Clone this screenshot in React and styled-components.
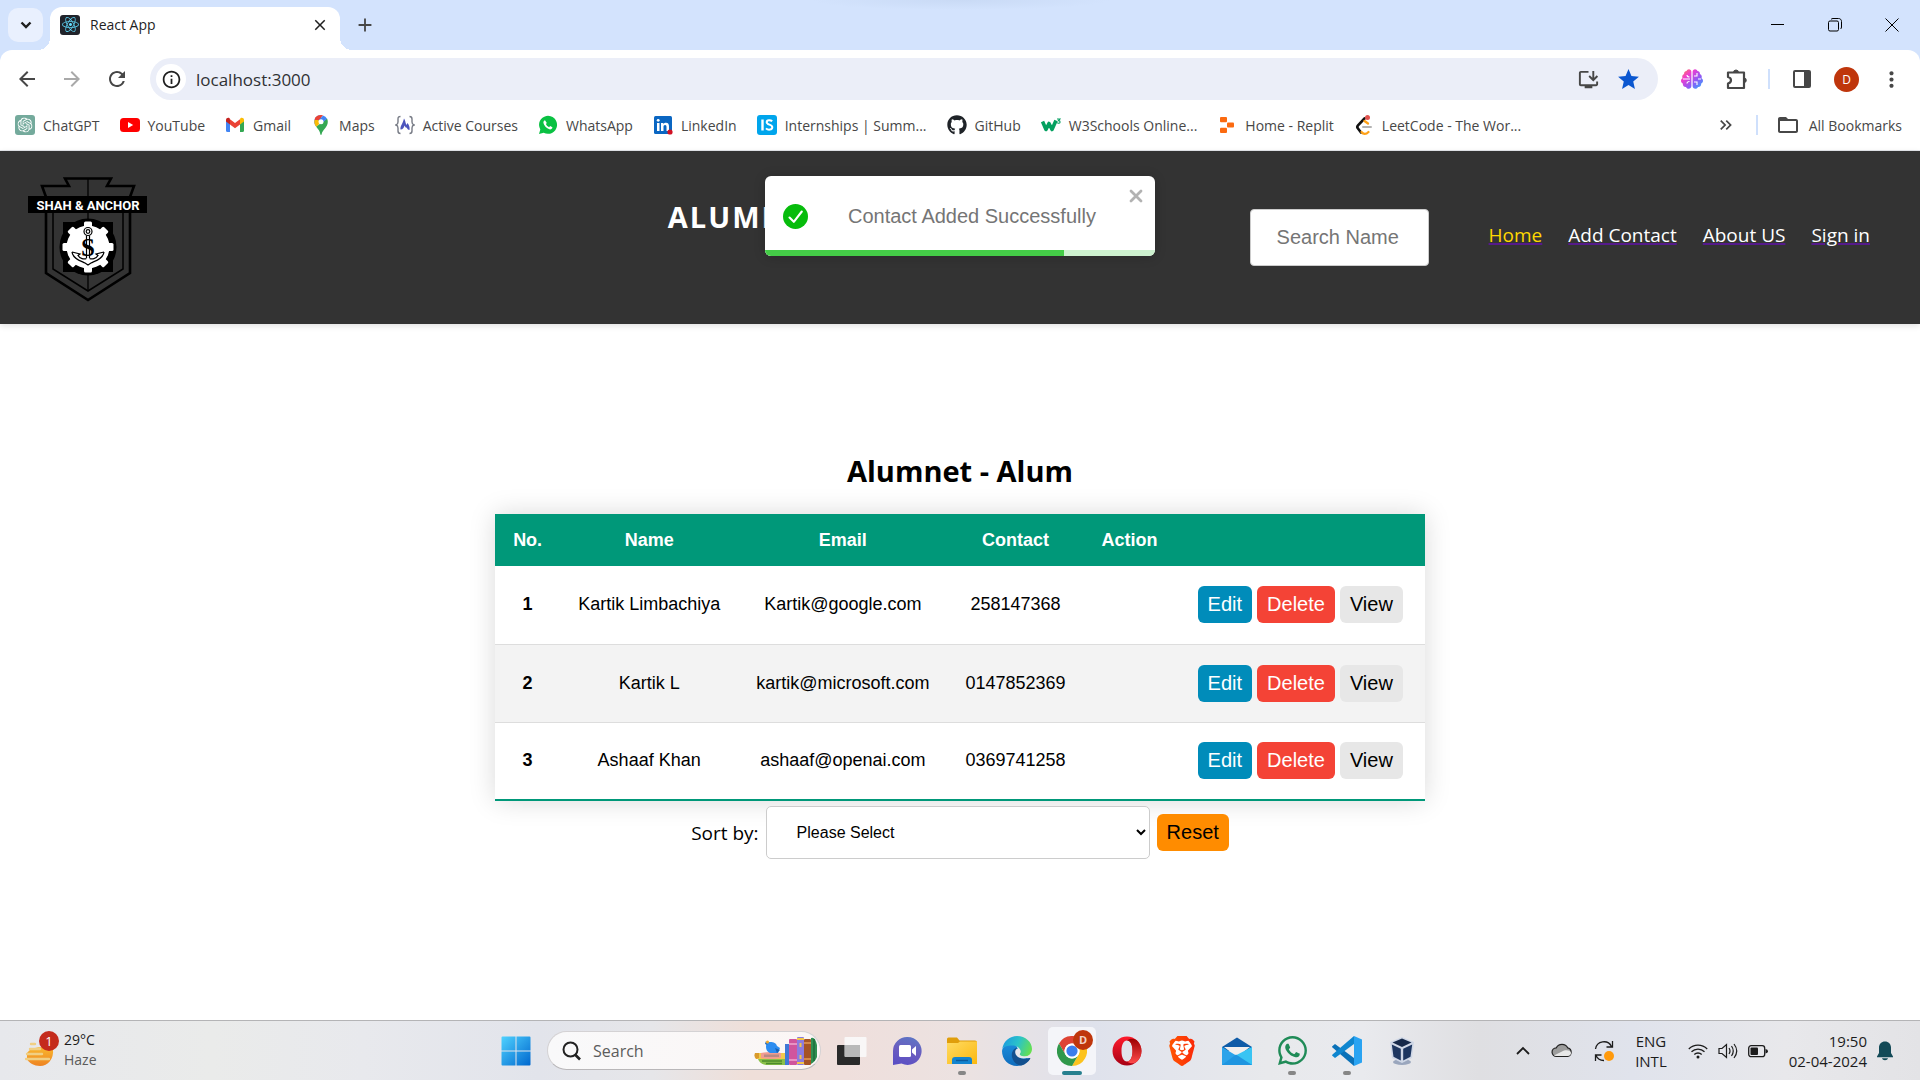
import React from "react";
import styled, { createGlobalStyle } from "styled-components";
import {
  MdAdd,
  MdArrowBack,
  MdArrowForward,
  MdClose,
  MdFolderOpen,
  MdInfoOutline,
  MdInstallDesktop,
  MdKeyboardDoubleArrowRight,
  MdMoreVert,
  MdRefresh,
  MdStar,
} from "react-icons/md";
import { FaBrain, FaGithub, FaReact, FaWhatsapp } from "react-icons/fa";
import { SiBrave, SiOpenai } from "react-icons/si";

const ui = `"Open Sans", "Noto Sans", sans-serif`;
const arial = `"Liberation Sans", Arial, sans-serif`;

const GlobalStyle = createGlobalStyle`
  *, *::before, *::after { box-sizing: border-box; }
  body { margin: 0; background: #fff; font-family: ${ui}; color: #000; }
  button, input, select { font: inherit; color: inherit; margin: 0; }
  button { border: 0; padding: 0; background: none; cursor: pointer; }
  svg { display: block; flex: none; }
`;

/* ---------- browser window ---------- */

const Screen = styled.div`
  display: flex;
  flex-direction: column;
  min-height: 100vh;
`;

const TabStrip = styled.header`
  display: flex;
  align-items: flex-end;
  height: 50px;
  padding-left: 8px;
  background: radial-gradient(ellipse 150px 10px at 50% 0, #c9daf5, transparent) #d3e3fd;
`;

const TabSearch = styled.button`
  display: grid;
  place-items: center;
  width: 35px;
  height: 34px;
  margin: 0 7px 8px 0;
  border-radius: 10px;
  background: #e9f0fe;
  color: #1f1f1f;
`;

const Tab = styled.div`
  position: relative;
  display: flex;
  align-items: center;
  gap: 10px;
  width: 290px;
  height: 43px;
  padding: 0 11px 8px 10px;
  border-radius: 12px 12px 0 0;
  background: #fff;
  font-size: 14px;
  color: #1f1f1f;

  &::before,
  &::after {
    content: "";
    position: absolute;
    bottom: 0;
    width: 12px;
    height: 12px;
  }
  &::before {
    right: 100%;
    background: radial-gradient(circle at 0 0, transparent 12px, #fff 12px);
  }
  &::after {
    left: 100%;
    background: radial-gradient(circle at 100% 0, transparent 12px, #fff 12px);
  }
`;

const TabTitle = styled.span`
  flex: 1;
`;

const Favicon = styled.span`
  display: grid;
  place-items: center;
  width: 20px;
  height: 20px;
  border-radius: 3px;
  background: #20232a;
  color: #61dafb;
`;

const IconButton = styled.button`
  display: grid;
  place-items: center;
  width: ${(p) => p.$w || 24}px;
  height: ${(p) => p.$h || 24}px;
  color: ${(p) => p.$color || "#474747"};
`;

const NewTab = styled(IconButton)`
  margin: 0 0 9px 9px;
`;

const WindowControls = styled.div`
  display: flex;
  margin-left: auto;
  align-self: stretch;
`;

const Toolbar = styled.div`
  background: #d3e3fd;
`;

const ToolbarPanel = styled.div`
  border-radius: 12px 12px 0 0;
  background: #fff;
  border-bottom: 1px solid #e4e6ea;
`;

const AddressRow = styled.div`
  display: flex;
  align-items: center;
  padding: 8px 17px 0 15px;
`;

const NavButtons = styled.div`
  display: flex;
  gap: 21px;
  margin-right: 21px;
`;

const Omnibox = styled.label`
  display: flex;
  flex: 1;
  align-items: center;
  height: 42px;
  padding: 0 18px 0 6px;
  border-radius: 21px;
  background: #ebeef8;
`;

const SiteInfo = styled(IconButton)`
  border-radius: 50%;
  background: #fff;
`;

const UrlInput = styled.input`
  flex: 1;
  border: 0;
  outline: 0;
  padding: 0 0 0 10px;
  background: none;
  font-size: 17px;
  color: #303134;
`;

const OmniActions = styled.div`
  display: flex;
  gap: 16px;
`;

const Extensions = styled.div`
  display: flex;
  align-items: center;
  gap: 20px;
  margin-left: 22px;
`;

const Divider = styled.span`
  width: 2px;
  height: 20px;
  background: #cfe0fc;
`;

const Avatar = styled.button`
  width: 25px;
  height: 25px;
  border-radius: 50%;
  background: #bf360c;
  color: #fff;
  font-size: 12px;
`;

const Bookmarks = styled.nav`
  display: flex;
  align-items: center;
  gap: 20px;
  height: 50px;
  padding: 0 18px 0 15px;
  font-size: 14px;
  color: #474747;
`;

const Bookmark = styled.a`
  display: flex;
  align-items: center;
  gap: 8px;
  color: inherit;
  text-decoration: none;
  white-space: nowrap;
`;

const BookmarkEnd = styled.div`
  display: flex;
  align-items: center;
  gap: 18px;
  margin-left: auto;
`;

const AllBookmarks = styled.button`
  display: flex;
  align-items: center;
  gap: 9px;
`;

/* ---------- page ---------- */

const Page = styled.div`
  position: relative;
  flex: 1;
  background: #fff;
`;

const SiteHeader = styled.header`
  display: grid;
  grid-template-columns: 11fr 10fr auto;
  align-items: center;
  padding: 22px 50px 22px 28px;
  background: #333;
  box-shadow: 0 2px 6px rgba(0, 0, 0, 0.12);
`;

const SiteTitle = styled.h1`
  margin: 0;
  padding-bottom: 42px;
  font-size: 29px;
  line-height: 40px;
  font-weight: 700;
  letter-spacing: 2px;
  color: #fff;
`;

const HeaderTools = styled.div`
  display: flex;
  align-items: center;
  gap: 60px;
`;

const SearchInput = styled.input`
  width: 179px;
  height: 57px;
  padding: 0 26px;
  border: 1px solid #ccc;
  border-radius: 4px;
  background: #fff;
  font-family: ${arial};
  font-size: 20px;

  &::placeholder {
    color: #757575;
    opacity: 1;
  }
`;

const SiteNav = styled.nav`
  display: flex;
  gap: 26px;
  padding-bottom: 5px;
  font-size: 19px;
`;

const SiteLink = styled.a`
  color: ${(p) => (p.$active ? "#ffd700" : "#fff")};
  text-decoration: underline 2px #551a8b;
`;

const Toast = styled.div`
  position: absolute;
  top: 25px;
  left: 50%;
  width: 390px;
  margin-left: -195px;
  border-radius: 6px;
  overflow: hidden;
  background: #fff;
  box-shadow: 0 1px 12px rgba(0, 0, 0, 0.2);
  font-family: ${arial};
  font-size: 20px;
  color: #757575;
`;

const ToastBody = styled.div`
  display: flex;
  align-items: center;
  gap: 40px;
  height: 74px;
  padding: 7px 18px 0;
`;

const ToastClose = styled.button`
  position: absolute;
  top: 12px;
  right: 11px;
  color: #b2b2b2;
`;

const ToastTrack = styled.div`
  height: 6px;
  background: #cdf1cf;
`;

const ToastFill = styled.div`
  height: 6px;
  background: #44cc47;
`;

const Main = styled.main`
  display: flex;
  flex-direction: column;
  align-items: center;
  padding: 127px 20px 40px;
`;

const Heading = styled.h2`
  margin: 0 0 23px;
  font-size: 29px;
  line-height: 40px;
  font-weight: 700;
`;

const Table = styled.table`
  border-collapse: collapse;
  background: #fff;
  box-shadow: 0 0 25px rgba(0, 0, 0, 0.15);
  font-family: ${arial};
  font-size: 18px;
  text-align: center;

  th,
  td {
    padding: 0 18px;
  }
  thead tr {
    height: 52px;
    background: #009879;
    color: #fff;
  }
  tbody tr {
    height: 78px;
    border-bottom: 1px solid #ddd;
  }
  tbody tr:nth-of-type(even) {
    background: #f3f3f3;
  }
  tbody tr:last-of-type {
    border-bottom: 2px solid #009879;
  }
`;

const Actions = styled.div`
  display: flex;
  gap: 5px;
  padding: 0 4px;
`;

const tones = {
  edit: ["#008cba", "#fff"],
  danger: ["#f44336", "#fff"],
  view: ["#e7e7e7", "#000"],
  reset: ["#ff8c00", "#000"],
};

const ActionButton = styled.button`
  height: 37px;
  padding: 0 10px;
  border-radius: 6px;
  background: ${(p) => tones[p.$tone][0]};
  color: ${(p) => tones[p.$tone][1]};
  font-family: ${arial};
  font-size: 20px;
`;

const SortRow = styled.div`
  display: flex;
  align-items: center;
  gap: 7px;
  margin-top: 5px;
  font-size: 19px;
`;

const SortSelect = styled.select`
  width: 384px;
  height: 53px;
  padding: 0 26px;
  border: 1px solid #ccc;
  border-radius: 5px;
  background: #fff;
  font-family: ${arial};
  font-size: 16px;
`;

/* ---------- taskbar ---------- */

const Taskbar = styled.footer`
  display: grid;
  grid-template-columns: 1fr auto 1fr;
  align-items: center;
  height: 60px;
  padding: 0 27px 0 25px;
  border-top: 1px solid #b4b4b6;
  background: linear-gradient(
    90deg,
    #e7e8ec 0%,
    #eaebea 11%,
    #e8e9ed 19%,
    #e2e4eb 28%,
    #e6e6e9 34%,
    #efdfd9 39%,
    #efdfdc 44%,
    #ece2e1 50%,
    #dfe2ec 57%,
    #e8e9ec 66%,
    #e9eaee 71%,
    #dfdfe2 77%,
    #e0e3ec 85%,
    #e8e8eb 93%,
    #e3e3e6 100%
  );
  font-size: 14px;
  color: #1c1c1c;
`;

const Weather = styled.button`
  display: flex;
  align-items: center;
  gap: 5px;
  justify-self: start;
  padding-bottom: 2px;
  line-height: 20px;
  text-align: left;
`;

const Muted = styled.span`
  display: block;
  color: #5b5b5b;
`;

const Apps = styled.div`
  display: flex;
  align-items: center;
  gap: 7px;
`;

const AppButton = styled.button`
  position: relative;
  display: grid;
  place-items: center;
  width: 48px;
  height: 48px;
  border-radius: 5px;
  background: ${(p) => (p.$active ? "#f4f5f9" : "none")};

  &::after {
    content: "";
    position: absolute;
    bottom: 0;
    width: ${(p) => (p.$active ? 20 : 8)}px;
    height: 4px;
    border-radius: 2px;
    background: ${(p) => (p.$active ? "#26808f" : p.$running ? "#868686" : "transparent")};
  }
`;

const AppBadge = styled.span`
  position: absolute;
  top: 3px;
  right: 3px;
  width: 20px;
  height: 20px;
  border-radius: 50%;
  background: #bf360c;
  color: #f3d3c8;
  font-size: 11px;
  font-weight: 700;
  line-height: 20px;
`;

const TaskSearch = styled.label`
  display: flex;
  align-items: center;
  gap: 12px;
  width: 274px;
  height: 39px;
  padding: 0 2px 0 14px;
  border: 1px solid #d4d2d4;
  border-bottom-color: #b9b7b9;
  border-radius: 20px;
  background: linear-gradient(90deg, #f9f9fa, #fbf6f5);
`;

const TaskSearchInput = styled.input`
  flex: 1;
  min-width: 0;
  padding: 0;
  border: 0;
  outline: 0;
  background: none;
  font-size: 16px;

  &::placeholder {
    color: #5c5c5c;
    opacity: 1;
  }
`;

const Tray = styled.div`
  display: flex;
  align-items: center;
  justify-self: end;
  gap: 21px;
  font-size: 15px;
`;

const TrayText = styled.button`
  line-height: 20px;
  text-align: ${(p) => p.$align || "center"};
`;

const TrayGroup = styled.div`
  display: flex;
  align-items: center;
  gap: 10px;
`;

/* ---------- drawings ---------- */

const ChevronDownIcon = () => (
  <svg width="14" height="14" viewBox="0 0 14 14" fill="none" stroke="currentColor" strokeWidth="2.400">
    <path d="M2.500 4.500L7 9l4.500-4.500" />
  </svg>
);

const PuzzleIcon = () => (
  <svg width="25" height="25" viewBox="0 0 25 25" fill="none" stroke="currentColor" strokeWidth="2.200" strokeLinejoin="round">
    <path d="M4 5.500H20V21H4V16.500C8 15.500 8 11 4 10z" />
    <path d="M9.500 5.500a2.500 2.500 0 0 1 5 0zM20 11a2.300 2.300 0 0 1 0 4.600z" fill="currentColor" strokeWidth="1" />
  </svg>
);

const ChatGptIcon = () => (
  <svg width="20" height="20" viewBox="0 0 20 20">
    <rect width="20" height="20" rx="3" fill="#74aa9c" />
    <g transform="translate(2.5 2.5)">
      <SiOpenai size={15} color="#fff" />
    </g>
  </svg>
);

const YouTubeIcon = () => (
  <svg width="20" height="20" viewBox="0 0 20 20">
    <rect y="3" width="20" height="14" rx="3.500" fill="#f00" />
    <path d="M8 7l5.200 3L8 13z" fill="#fff" />
  </svg>
);

const GmailIcon = () => (
  <svg width="20" height="20" viewBox="0 0 20 20">
    <path d="M1 5v10.500a1.500 1.500 0 0 0 1.500 1.500H5V8.500z" fill="#4285f4" />
    <path d="M15 8.500V17h2.500a1.500 1.500 0 0 0 1.500-1.500V5z" fill="#34a853" />
    <path d="M15 4.500V9.500L19 6.500V5c0-2-2.200-2.900-3.600-1.800z" fill="#fbbc04" />
    <path d="M5 9.500V4.300l5 3.800 5-3.800v5.200l-5 3.800z" fill="#ea4335" />
    <path d="M1 5v1.500l4 3V4.300L4.600 3.200C3.200 2.100 1 3 1 5z" fill="#c5221f" />
  </svg>
);

const MapsIcon = () => (
  <svg width="20" height="20" viewBox="0 0 20 20">
    <path d="M10 0C6 0 3.200 3.100 3.200 6.800c0 1.700.6 3 1.500 4.200L10 5z" fill="#4285f4" />
    <path d="M4.700 1.900A6.700 6.700 0 0 0 3.600 4.600L7 7.500 10.500 3z" fill="#ea4335" />
    <path d="M3.500 5C2.800 8 3.900 10 5.300 11.900L12 5z" fill="#fbbc04" />
    <path d="M16 3.600l-10.800 8.200C7.500 14.700 8.800 16 9.300 19c.2 1.200 1.200 1.200 1.400 0 .6-4 6.100-6.500 6.100-12.200 0-1.200-.3-2.300-.8-3.200z" fill="#34a853" />
    <path d="M10 0c-2.200 0-4 .8-5.300 2.200L8 5l4-4.700A6 6 0 0 0 10 0z" fill="#ea4335" />
    <path d="M12 .4L7.500 5.500 10 9l6-5.300A6.600 6.600 0 0 0 12 .4z" fill="#4285f4" />
    <circle cx="10" cy="6.800" r="2.500" fill="#fff" />
  </svg>
);

const CoursesIcon = () => (
  <svg width="20" height="20" viewBox="0 0 20 20" fill="none">
    <path d="M5.500 1.500c-2 0-2.500.8-2.500 2.500v3c0 1.800-.7 2.600-2 3 1.300.4 2 1.200 2 3v3c0 1.700.5 2.500 2.500 2.500M14.500 1.500c2 0 2.500.8 2.500 2.500v3c0 1.800.7 2.600 2 3-1.300.4-2 1.200-2 3v3c0 1.700-.5 2.500-2.500 2.500" stroke="#777b85" strokeWidth="1.400" />
    <path d="M5.500 14.500C5 11 7.500 9.500 9 3.500c1.500 2 1.200 4 2.500 6.500l1-2c1.500 2 2.500 4 2 7-1.500 0-2.300-1.200-2.700-2.500-1 .8-1.500-.5-2.300-2C9 12.500 8 14.500 5.500 14.500z" fill="#4b53bc" />
  </svg>
);

const WhatsAppBookmarkIcon = () => (
  <svg width="20" height="20" viewBox="0 0 20 20">
    <path d="M1 19l1.300-4.600A9 9 0 1 1 5.700 17.700z" fill="#0ac143" />
    <path d="M7 5.200c-.7.100-1.700 1-1.600 2.400.2 2.900 3.700 6.600 6.700 6.800 1.300 0 2.300-.9 2.300-2.200l-2.300-1.200-1 1.200c-1.500-.6-2.500-1.600-3.200-3.100l.9-1.100z" fill="#fff" />
  </svg>
);

const LinkedInIcon = () => (
  <svg width="20" height="20" viewBox="0 0 20 20">
    <rect x="1" y="1" width="18" height="18" rx="1.500" fill="#0a66c2" />
    <path d="M4 8h2.500v8H4zM8 8h2.400v1.200C11 8.200 12 7.800 13 7.800c2.300 0 3 1.400 3 3.700V16h-2.500v-4c0-1.200-.3-2-1.400-2-1.200 0-1.600.8-1.600 2v4H8z" fill="#fff" />
    <circle cx="5.200" cy="5.300" r="1.400" fill="#fff" />
    <circle cx="17" cy="17" r="2.600" fill="#d11124" />
  </svg>
);

const InternshipsIcon = () => (
  <svg width="20" height="20" viewBox="0 0 20 20">
    <rect width="20" height="20" rx="3" fill="#00a5ec" />
    <path d="M5.500 4.500v11" stroke="#fff" strokeWidth="2.400" />
    <path d="M15.200 6.300c-1.500-1.400-5.500-1.700-5.500.9 0 2.800 5.600 2 5.600 5 0 3-4.500 3-6.300 1.200" fill="none" stroke="#fff" strokeWidth="2" />
  </svg>
);

const W3Icon = () => (
  <svg width="20" height="20" viewBox="0 0 20 20" fill="none">
    <path d="M1.500 6.500l3.500 8 3-6 3 6 4-9" stroke="#04a060" strokeWidth="3.600" strokeLinejoin="round" />
    <path d="M16 4h3l-1.500 1.600c1.300 0 1.600.7 1.600 1.400 0 1.400-2.100 1.600-3 .7" stroke="#04a060" strokeWidth="1.100" />
  </svg>
);

const ReplitIcon = () => (
  <svg width="20" height="20" viewBox="0 0 20 20" fill="#fb6a10">
    <rect x="3" y="2" width="7" height="5.200" rx="1" />
    <rect x="10" y="7.400" width="7" height="5.200" rx="1" />
    <rect x="3" y="12.800" width="7" height="5.200" rx="1" />
  </svg>
);

const LeetCodeIcon = () => (
  <svg width="20" height="20" viewBox="0 0 20 20" fill="none" strokeLinecap="round">
    <path d="M10.500 3.500L4 10.300c-.9 1-.9 2.200 0 3.200l3 4" stroke="#111" strokeWidth="2.600" />
    <path d="M10.500 6l3.500 2.500M7.500 17c1.800 2.400 4.500 2.600 7 0" stroke="#ffa116" strokeWidth="2.200" />
    <path d="M9 12h8" stroke="#b3b3b3" strokeWidth="2" />
    <circle cx="13.500" cy="2.500" r="2.500" fill="#e0524d" />
  </svg>
);

const SidePanelIcon = () => (
  <svg width="20" height="20" viewBox="0 0 20 20">
    <rect x="2" y="2" width="16" height="16" rx="1" fill="none" stroke="#474747" strokeWidth="2" />
    <path d="M12 2h6v16h-6z" fill="#474747" />
  </svg>
);

const MinimizeIcon = () => (
  <svg width="14" height="14" viewBox="0 0 14 14" stroke="#000">
    <path d="M0 6.500h13" />
  </svg>
);

const RestoreIcon = () => (
  <svg width="14" height="14" viewBox="0 0 14 14" fill="none" stroke="#000">
    <rect x=".5" y="3" width="10" height="10" rx="1.500" />
    <path d="M3 1.500C3.500.8 4 .5 5 .5h5.500c1.800 0 3 1.200 3 3V9c0 1-.3 1.500-1 2" />
  </svg>
);

const CloseIcon = () => (
  <svg width="14" height="14" viewBox="0 0 14 14" stroke="#000">
    <path d="M.5.5l13 13M13.500.5l-13 13" />
  </svg>
);

const gearTeeth = [0, 45, 90, 135, 180, 225, 270, 315];

const CollegeLogo = () => (
  <svg width="120" height="129" viewBox="0 -4 120 129" role="img" aria-label="Shah & Anchor logo">
    <g fill="none" stroke="#000" strokeWidth="2.600">
      <path d="M18 20L14 9H41L37 1.500H83L79 9H106L102 20" />
      <path d="M18 36V96L60 123L102 96V36" />
      <path d="M25 36V92L60 114L95 92V36" strokeWidth="1.500" />
      <path d="M60 2V113" strokeWidth="1.300" />
    </g>
    <rect x="0" y="19" width="119" height="17" fill="#000" />
    <text x="60" y="32.500" textAnchor="middle" fill="#fff" fontFamily="Roboto, sans-serif" fontSize="13" fontWeight="700">
      SHAH &amp; ANCHOR
    </text>
    <rect x="35" y="45" width="50" height="50" fill="#000" />
    <circle cx="60" cy="70" r="28.500" fill="#000" />
    <circle cx="60" cy="70" r="21.500" fill="#fff" />
    {gearTeeth.map((angle) => (
      <rect key={angle} x="56" y="44.500" width="8" height="9" rx="1.500" fill="#fff" transform={`rotate(${angle} 60 70)`} />
    ))}
    <g fill="none" stroke="#000" strokeWidth="1.200">
      <circle cx="60" cy="54.500" r="4" />
      <circle cx="60" cy="54.500" r="1.800" />
      <path d="M58.500 58.500V81M61.500 58.500V81M44 75l8 2-2 1.500c2 3.500 6 4 8.500 3M76 75l-8 2 2 1.500c-2 3.500-6 4-8.500 3M44 75c1 7 9 9 13 11l3 2 3-2c4-2 12-4 13-11" />
    </g>
    <text x="60" y="78.500" textAnchor="middle" fontFamily="Liberation Serif, serif" fontSize="25" fontWeight="700">
      S
    </text>
  </svg>
);

const SuccessIcon = () => (
  <svg width="25" height="25" viewBox="0 0 25 25">
    <circle cx="12.500" cy="12.500" r="12.500" fill="#07bc0c" />
    <path d="M6.500 13.500l4.300 4.300 8-10.300" fill="none" stroke="#fff" strokeWidth="2.100" strokeLinecap="round" strokeLinejoin="round" />
  </svg>
);

const ToastCross = () => (
  <svg width="16" height="16" viewBox="0 0 16 16">
    <path d="M3 3l10 10M13 3L3 13" stroke="currentColor" strokeWidth="2.800" strokeLinecap="round" />
  </svg>
);

const WeatherIcon = () => (
  <svg width="34" height="38" viewBox="0 0 34 38">
    <defs>
      <linearGradient id="sun" x1="0" y1="0" x2="0" y2="1">
        <stop offset="0" stopColor="#f9b82e" />
        <stop offset="1" stopColor="#ee8322" />
      </linearGradient>
    </defs>
    <path d="M2 22C5 17 14 14 28 18c1 10-5 17-13 17C9 35 4 32 2 28z" fill="url(#sun)" />
    <g stroke="#f0cf83" strokeWidth="2.400" strokeLinecap="round">
      <path d="M6 13h4M5 18h10M2 23h11M1 28h23M14 23h3" />
    </g>
    <circle cx="24" cy="10" r="10" fill="#c42b1c" />
    <text x="24" y="15" textAnchor="middle" fontFamily="Open Sans, sans-serif" fontSize="13" fill="#fff">
      1
    </text>
  </svg>
);

const WindowsIcon = () => (
  <svg width="30" height="30" viewBox="0 0 30 30">
    <defs>
      <linearGradient id="win" x1="0" y1="0" x2="1" y2="1">
        <stop offset="0" stopColor="#4fd2ff" />
        <stop offset="1" stopColor="#0067ce" />
      </linearGradient>
    </defs>
    <path fill="url(#win)" d="M1.500.5H14.500V14.500H.5V1.500a1 1 0 0 1 1-1zM15.500.5H28.500a1 1 0 0 1 1 1V14.500H15.500zM.5 15.500H14.500V29.500H1.500a1 1 0 0 1-1-1zM15.500 15.500H29.500V28.500a1 1 0 0 1-1 1H15.500z" />
  </svg>
);

const MagnifierIcon = () => (
  <svg width="19" height="20" viewBox="0 0 19 20" fill="none" stroke="#222" strokeWidth="2">
    <circle cx="8.500" cy="8.500" r="7" />
    <path d="M13 13.500l5 5" strokeWidth="2.600" />
  </svg>
);

const BooksIcon = () => (
  <svg width="64" height="30" viewBox="0 0 64 30">
    <path d="M2 17h29v6H2z" fill="#f2c94c" />
    <path d="M1 17q-1.500 3 1 6l3-1v-5z" fill="#d99a2b" />
    <path d="M7 17q10-2 20 0v5q-10 2-20 0z" fill="#f29c91" />
    <path d="M10 18.500h15v2.500H10z" fill="#b98a83" />
    <path d="M4 23h27v6H12q-6-1-8-6z" fill="#8bc04a" />
    <path d="M8 25h20M12 27.500h16" stroke="#4d8a2c" strokeWidth="1.400" />
    <path d="M12 11c0-3 1-5 4-5 4 0 6 1 7 4l3 2-2 5H16c-2.500-1-4-3-4-6z" fill="#2d8df0" />
    <path d="M12 5l1.500 4L11 8zM21 12l5 2-3 3z" fill="#1762b8" />
    <circle cx="13.500" cy="6" r="1.500" fill="#f5a623" />
    <rect x="31" y="8" width="4" height="21" fill="#3f78d6" />
    <rect x="35" y="3" width="8" height="26" rx="1" fill="#d0559d" />
    <path d="M35 8h8M35 24h8" stroke="#f0a8cf" strokeWidth="1.500" />
    <rect x="43" y="1" width="7" height="28" rx="1" fill="#8b7be0" />
    <path d="M43 3h7M43 27h7M46.500 7v4M46.500 19v4" stroke="#f3c64b" strokeWidth="2" />
    <rect x="50" y="3" width="7" height="26" rx="1" fill="#a55326" />
    <path d="M50 7h7M50 23h7" stroke="#e49a55" strokeWidth="1.500" />
    <path d="M57 2q4-2 6 7v12q-2 5-6 7z" fill="#2f8f52" />
    <path d="M60 3v22" stroke="#1f6d3c" strokeWidth="1.500" />
  </svg>
);

const TaskViewIcon = () => (
  <svg width="30" height="30" viewBox="0 0 30 30">
    <rect x="0" y="9" width="23" height="20" rx="1" fill="#2a2a2a" />
    <rect x="7.500" y="1" width="22" height="20" rx="1" fill="#fafafa" fillOpacity=".9" />
    <path d="M8 9h15v12H8z" fill="#b9b9b9" />
  </svg>
);

const ChatIcon = () => (
  <svg width="30" height="30" viewBox="0 0 30 30">
    <defs>
      <linearGradient id="chat" x1=".6" y1="0" x2=".3" y2="1">
        <stop offset="0" stopColor="#5e74c4" />
        <stop offset=".5" stopColor="#6a5cc0" />
        <stop offset="1" stopColor="#5a4fc4" />
      </linearGradient>
    </defs>
    <path d="M15.500 1a14 14 0 1 1-6 26.600L1 29V15A14 14 0 0 1 15.500 1z" fill="url(#chat)" />
    <rect x="7" y="9" width="12" height="12" rx="1.500" fill="#fff" />
    <path d="M20 13.500l4-3.500v10l-4-3.500z" fill="#fff" />
  </svg>
);

const FolderIcon = () => (
  <svg width="30" height="30" viewBox="0 0 30 30">
    <defs>
      <linearGradient id="folder" x1="0" y1="0" x2="1" y2="1">
        <stop offset="0" stopColor="#ffdb63" />
        <stop offset="1" stopColor="#fbb80f" />
      </linearGradient>
    </defs>
    <path d="M0 3q0-1.500 1.500-1.500H10l2.500 3H28q2 0 2 2V10H0z" fill="#e09e0b" />
    <path d="M0 7h11l2-1.500H30V28H0z" fill="url(#folder)" />
    <path d="M5 28v-4q0-3 3-3h14q3 0 3 3v4z" fill="#1384cf" />
    <path d="M9 24.500h12" stroke="#0b5a9c" strokeWidth="1.400" />
  </svg>
);

const EdgeIcon = () => (
  <svg width="30" height="30" viewBox="0 0 30 30">
    <defs>
      <linearGradient id="edgeTop" x1="0" y1=".3" x2="1" y2=".6">
        <stop offset="0" stopColor="#1c9be0" />
        <stop offset=".5" stopColor="#2bc3c9" />
        <stop offset="1" stopColor="#66e04f" />
      </linearGradient>
      <linearGradient id="edgeBase" x1="0" y1="0" x2="0" y2="1">
        <stop offset="0" stopColor="#1b8ddb" />
        <stop offset="1" stopColor="#0f6cbd" />
      </linearGradient>
    </defs>
    <path d="M0 15C1 9 8 6 14 9l3 6v6l11 1.500C25 27 20 30 15 30 6.500 30 0 23.500 0 15z" fill="url(#edgeBase)" />
    <path d="M.2 13C1.500 5 8 0 15 0c8.500 0 15 6 15 13 0 4.500-3.500 7.500-7.500 7.500-3.500 0-5-1.200-5-2 0-.6 1-1 1-3 0-3.500-3.500-6-8-6-5.500 0-9 1.500-10.300 3.500z" fill="url(#edgeTop)" />
    <path d="M15 11.500c-3 1-6 4.500-5 9.500 1 5 5 8.500 9.500 8.500 4-1 7-3.800 8.700-6.700.4-.7-.2-1-.7-.8-4 1.800-9 1.200-11.500-1.500-2.500-2.500-2.500-6-1-9z" fill="#12508f" />
    <path d="M18 13.500c-4-2.500-6.500 2-3.500 6 2.600 3.500 8 3.400 11 2.300 1.500-.6 2.500-1.300 3.500-2.800-2 1.500-5 1.800-7.500 1.400-2.500-.4-4-1.200-3.900-2.200.2-.8 1.600-2 .4-4.700z" fill="#e6e7ec" />
  </svg>
);

const ChromeIcon = () => (
  <svg width="30" height="30" viewBox="0 0 30 30">
    <path d="M15 7.500H28A15 15 0 0 0 2 7.500L8.500 18.750A7.500 7.500 0 0 1 15 7.500z" fill="#de4334" />
    <path d="M28 7.500H15A7.500 7.500 0 0 1 21.500 18.750L15 30A15 15 0 0 0 28 7.500z" fill="#fcc31e" />
    <path d="M21.500 18.750A7.500 7.500 0 0 1 8.500 18.750L2 7.500A15 15 0 0 0 15 30z" fill="#30984b" />
    <circle cx="15" cy="15" r="7.500" fill="#fff" />
    <circle cx="15" cy="15" r="5.600" fill="#3b7ded" />
  </svg>
);

const OperaIcon = () => (
  <svg width="30" height="30" viewBox="0 0 30 30">
    <defs>
      <linearGradient id="opera" x1="0" y1="0" x2="0" y2="1">
        <stop offset="0" stopColor="#ff1b2d" />
        <stop offset="1" stopColor="#a70014" />
      </linearGradient>
      <linearGradient id="operaSide" x1="0" y1="0" x2="0" y2="1">
        <stop offset="0" stopColor="#9c0000" />
        <stop offset="1" stopColor="#ff4b4b" />
      </linearGradient>
    </defs>
    <path fillRule="evenodd" fill="url(#opera)" d="M15 .5A14.500 14.500 0 1 0 15 29.500A14.500 14.500 0 1 0 15 .5zM15 4.500C18.500 4.500 20.500 9 20.500 15S18.500 25.500 15 25.500S9.500 21 9.500 15S11.500 4.500 15 4.500z" />
    <path d="M15 4.500c3-2.500 6.500-2 9.500-.4a14.500 14.500 0 0 1 0 21.800c-3 1.600-6.500 2.100-9.500-.4 3.500 0 5.500-4.500 5.500-10.500S18.500 4.500 15 4.500z" fill="url(#operaSide)" />
  </svg>
);

const BraveIcon = () => (
  <svg width="30" height="30" viewBox="0 0 30 30">
    <defs>
      <linearGradient id="brave" x1="0" y1="0" x2="1" y2="0">
        <stop offset="0" stopColor="#ff5601" />
        <stop offset="1" stopColor="#fb2a0a" />
      </linearGradient>
    </defs>
    <path d="M7 5h16l3 6-4 12-7 5-7-5-4-12z" fill="#fff" />
    <SiBrave size={30} style={{ fill: "url(#brave)" }} />
  </svg>
);

const MailIcon = () => (
  <svg width="30" height="30" viewBox="0 0 30 30">
    <path d="M0 11L15 1.500 30 11v4H0z" fill="#0f5ba7" />
    <path d="M2 11h26L15 21z" fill="#f1efee" />
    <path d="M0 11l15 9 15-9v18H0z" fill="#2ba3ea" />
    <path d="M30 11v18L13.500 19.500z" fill="#39c4f3" />
    <path d="M0 29h30L14 18.500z" fill="#1f95e0" />
  </svg>
);

const VsCodeIcon = () => (
  <svg width="30" height="30" viewBox="0 0 30 30">
    <path d="M0 10.500L3 8l19 14v8L.5 11.500z" fill="#0a71b8" />
    <path d="M0 19.500L3 22 22 8V0L.5 18.500z" fill="#0f86cf" />
    <path d="M22 0l8 3.500v23L22 30z" fill="#29a3f2" />
  </svg>
);

const VirtualBoxIcon = () => (
  <svg width="30" height="30" viewBox="0 0 30 30">
    <ellipse cx="15" cy="26" rx="9" ry="3" fill="#9aa6bd" />
    <path d="M15 1l12 5-2 16-10 5-10-5L3 6z" fill="#cfd7e6" />
    <path d="M15 2.500l9.500 4L15 11 5.500 6.500z" fill="#16294a" />
    <path d="M4.800 8.500l9 4.300v11.700l-7.300-3.700zM25.200 8.500l-9 4.300v11.700l7.300-3.700z" fill="#1d3660" />
  </svg>
);

const ChevronUpIcon = () => (
  <svg width="14" height="20" viewBox="0 0 14 20" fill="none" stroke="#1c1c1c" strokeWidth="1.800">
    <path d="M1 13l6-6 6 6" />
  </svg>
);

const CloudIcon = () => (
  <svg width="22" height="20" viewBox="0 0 22 20" stroke="#222" strokeWidth="1.200">
    <path d="M5.500 15.500a4.300 4.300 0 0 1-.3-8.600 6.500 6.500 0 0 1 11.600 0 4.400 4.400 0 0 1-.3 8.600z" fill="#9d9d9d" />
    <path d="M3 14.500L13 9.500c4-1 7 .5 7 2.500s-1.500 2.900-3.500 2.900h-11c-1 0-2 0-2.500-.4z" fill="#e8e8e8" stroke="none" />
  </svg>
);

const SyncIcon = () => (
  <svg width="20" height="22" viewBox="0 0 20 22" fill="none" stroke="#1c1c1c" strokeWidth="1.300">
    <path d="M1.500 9A8.500 8.500 0 0 1 17.500 6.500M18.500 1v6h-6M10 20.500a8.500 8.500 0 0 1-8-5M1.500 21v-6h6" />
    <circle cx="15" cy="16" r="5" fill="#ff9a0c" stroke="none" />
  </svg>
);

const WifiIcon = () => (
  <svg width="20" height="18" viewBox="0 0 20 18" fill="none" stroke="#1c1c1c" strokeWidth="1.300">
    <path d="M.8 7a13 13 0 0 1 18.400 0M3.500 9.800a9.200 9.200 0 0 1 13 0M6.300 12.500a5.300 5.300 0 0 1 7.400 0" />
    <circle cx="10" cy="15" r="1.500" fill="#1c1c1c" stroke="none" />
  </svg>
);

const VolumeIcon = () => (
  <svg width="20" height="18" viewBox="0 0 20 18" fill="none" stroke="#1c1c1c" strokeWidth="1.200">
    <path d="M1 6.500h3L8.500 2.500v13L4 11.500H1zM11 6q2 3 0 6M13.500 4q3.500 5 0 10M16 2q5.500 7 0 14" />
  </svg>
);

const BatteryIcon = () => (
  <svg width="20" height="18" viewBox="0 0 20 18">
    <rect x=".7" y="3.700" width="16" height="11" rx="2.500" fill="none" stroke="#1c1c1c" strokeWidth="1.300" />
    <rect x="2.500" y="5.500" width="7.500" height="7.500" rx="1" fill="#1c1c1c" />
    <path d="M17.500 7q2.500.5 2.500 2.200t-2.500 2.300z" fill="#1c1c1c" />
  </svg>
);

const BellIcon = () => (
  <svg width="16" height="20" viewBox="0 0 16 20" fill="#134a57">
    <path d="M8 .5c3.500 0 6 2.600 6 6V12l2 3.500v.8H0v-.8L2 12V6.500c0-3.400 2.500-6 6-6zM5 17.300h6c-.4 2.500-5.600 2.500-6 0z" />
  </svg>
);

const BrainIcon = () => (
  <svg width="22" height="24" viewBox="0 0 22 24">
    <defs>
      <linearGradient id="brain" x1="0" y1="0" x2="1" y2="1">
        <stop offset="0" stopColor="#ff8a3c" />
        <stop offset=".3" stopColor="#f03cd0" />
        <stop offset=".65" stopColor="#8a5cf6" />
        <stop offset="1" stopColor="#27b4ff" />
      </linearGradient>
    </defs>
    <FaBrain size={22} y="1" style={{ fill: "url(#brain)" }} />
    <path d="M2 12h7M6 8q0 2 2.500 2M6 16.500q0-2 2.500-2M20 12h-3M13 9h3V6M13 15h3v3" fill="none" stroke="#fff" strokeWidth="1.100" />
  </svg>
);

/* ---------- data ---------- */

const bookmarks = [
  ["ChatGPT", <ChatGptIcon />],
  ["YouTube", <YouTubeIcon />],
  ["Gmail", <GmailIcon />],
  ["Maps", <MapsIcon />],
  ["Active Courses", <CoursesIcon />],
  ["WhatsApp", <WhatsAppBookmarkIcon />],
  ["LinkedIn", <LinkedInIcon />],
  ["Internships | Summ...", <InternshipsIcon />],
  ["GitHub", <FaGithub size={20} color="#1f2328" />],
  ["W3Schools Online...", <W3Icon />],
  ["Home - Replit", <ReplitIcon />],
  ["LeetCode - The Wor...", <LeetCodeIcon />],
];

const contacts = [
  { name: "Kartik Limbachiya", email: "Kartik@google.com", contact: "258147368" },
  { name: "Kartik L", email: "kartik@microsoft.com", contact: "0147852369" },
  { name: "Ashaaf Khan", email: "ashaaf@openai.com", contact: "0369741258" },
];

const apps = [
  { label: "Task view", icon: <TaskViewIcon /> },
  { label: "Chat", icon: <ChatIcon /> },
  { label: "File Explorer", icon: <FolderIcon />, running: true },
  { label: "Edge", icon: <EdgeIcon /> },
  { label: "Chrome", icon: <ChromeIcon />, active: true, badge: "D" },
  { label: "Opera", icon: <OperaIcon /> },
  { label: "Brave", icon: <BraveIcon /> },
  { label: "Mail", icon: <MailIcon /> },
  { label: "WhatsApp", icon: <FaWhatsapp size={33} color="#1f8b57" />, running: true },
  { label: "Visual Studio Code", icon: <VsCodeIcon />, running: true },
  { label: "VirtualBox", icon: <VirtualBoxIcon /> },
];

export default function App() {
  return (
    <Screen>
      <GlobalStyle />

      <TabStrip>
        <TabSearch aria-label="Search tabs">
          <ChevronDownIcon />
        </TabSearch>
        <Tab>
          <Favicon>
            <FaReact size={17} />
          </Favicon>
          <TabTitle>React App</TabTitle>
          <IconButton $w={18} $h={18} $color="#1f1f1f" aria-label="Close tab">
            <MdClose size={18} />
          </IconButton>
        </Tab>
        <NewTab $w={32} $h={32} aria-label="New tab">
          <MdAdd size={22} />
        </NewTab>
        <WindowControls>
          <IconButton $w={57} $h={50} aria-label="Minimize">
            <MinimizeIcon />
          </IconButton>
          <IconButton $w={57} $h={50} aria-label="Restore">
            <RestoreIcon />
          </IconButton>
          <IconButton $w={57} $h={50} aria-label="Close">
            <CloseIcon />
          </IconButton>
        </WindowControls>
      </TabStrip>

      <Toolbar>
        <ToolbarPanel>
          <AddressRow>
            <NavButtons>
              <IconButton aria-label="Back">
                <MdArrowBack size={24} />
              </IconButton>
              <IconButton $color="#a9a9a9" aria-label="Forward">
                <MdArrowForward size={24} />
              </IconButton>
              <IconButton aria-label="Reload">
                <MdRefresh size={24} />
              </IconButton>
            </NavButtons>
            <Omnibox>
              <SiteInfo $w={30} $h={30} $color="#1f1f1f" aria-label="Site information">
                <MdInfoOutline size={21} />
              </SiteInfo>
              <UrlInput aria-label="Address" defaultValue="localhost:3000" />
              <OmniActions>
                <IconButton aria-label="Install app">
                  <MdInstallDesktop size={23} />
                </IconButton>
                <IconButton $color="#0b57d0" aria-label="Edit bookmark">
                  <MdStar size={25} />
                </IconButton>
              </OmniActions>
            </Omnibox>
            <Extensions>
              <IconButton aria-label="Brain extension">
                <BrainIcon />
              </IconButton>
              <IconButton aria-label="Extensions">
                <PuzzleIcon />
              </IconButton>
              <Divider />
              <IconButton aria-label="Side panel">
                <SidePanelIcon />
              </IconButton>
              <Avatar>D</Avatar>
              <IconButton aria-label="Menu">
                <MdMoreVert size={25} />
              </IconButton>
            </Extensions>
          </AddressRow>
          <Bookmarks aria-label="Bookmarks">
            {bookmarks.map(([label, icon]) => (
              <Bookmark href="#" key={label}>
                {icon}
                {label}
              </Bookmark>
            ))}
            <BookmarkEnd>
              <IconButton aria-label="More bookmarks">
                <MdKeyboardDoubleArrowRight size={20} />
              </IconButton>
              <Divider />
              <AllBookmarks>
                <MdFolderOpen size={24} />
                All Bookmarks
              </AllBookmarks>
            </BookmarkEnd>
          </Bookmarks>
        </ToolbarPanel>
      </Toolbar>

      <Page>
        <SiteHeader>
          <CollegeLogo />
          <SiteTitle>ALUMNET</SiteTitle>
          <HeaderTools>
            <SearchInput type="text" placeholder="Search Name" aria-label="Search Name" />
            <SiteNav>
              <SiteLink href="#" $active>
                Home
              </SiteLink>
              <SiteLink href="#">Add Contact</SiteLink>
              <SiteLink href="#">About US</SiteLink>
              <SiteLink href="#">Sign in</SiteLink>
            </SiteNav>
          </HeaderTools>
        </SiteHeader>

        <Toast role="alert">
          <ToastBody>
            <SuccessIcon />
            Contact Added Successfully
          </ToastBody>
          <ToastClose aria-label="Close notification">
            <ToastCross />
          </ToastClose>
          <ToastTrack>
            <ToastFill style={{ width: "76.6%" }} />
          </ToastTrack>
        </Toast>

        <Main>
          <Heading>Alumnet - Alum</Heading>
          <Table>
            <thead>
              <tr>
                <th>No.</th>
                <th>Name</th>
                <th>Email</th>
                <th>Contact</th>
                <th>Action</th>
                <th aria-label="Buttons" />
              </tr>
            </thead>
            <tbody>
              {contacts.map((c, i) => (
                <tr key={c.email}>
                  <th scope="row">{i + 1}</th>
                  <td>{c.name}</td>
                  <td>{c.email}</td>
                  <td>{c.contact}</td>
                  <td />
                  <td>
                    <Actions>
                      <ActionButton $tone="edit">Edit</ActionButton>
                      <ActionButton $tone="danger">Delete</ActionButton>
                      <ActionButton $tone="view">View</ActionButton>
                    </Actions>
                  </td>
                </tr>
              ))}
            </tbody>
          </Table>
          <SortRow>
            <label htmlFor="sort">Sort by:</label>
            <SortSelect id="sort">
              <option>Please Select</option>
              <option>Name</option>
              <option>Email</option>
              <option>Contact</option>
            </SortSelect>
            <ActionButton $tone="reset">Reset</ActionButton>
          </SortRow>
        </Main>
      </Page>

      <Taskbar>
        <Weather>
          <WeatherIcon />
          <span>
            29°C
            <Muted>Haze</Muted>
          </span>
        </Weather>
        <Apps>
          <AppButton aria-label="Start">
            <WindowsIcon />
          </AppButton>
          <TaskSearch>
            <MagnifierIcon />
            <TaskSearchInput placeholder="Search" aria-label="Search" />
            <BooksIcon />
          </TaskSearch>
          {apps.map((app) => (
            <AppButton key={app.label} aria-label={app.label} $active={app.active} $running={app.running}>
              {app.icon}
              {app.badge && <AppBadge>{app.badge}</AppBadge>}
            </AppButton>
          ))}
        </Apps>
        <Tray>
          <IconButton $w={14} aria-label="Hidden icons">
            <ChevronUpIcon />
          </IconButton>
          <IconButton $w={22} aria-label="OneDrive">
            <CloudIcon />
          </IconButton>
          <IconButton $w={20} aria-label="Windows Update">
            <SyncIcon />
          </IconButton>
          <TrayText>
            ENG
            <br />
            INTL
          </TrayText>
          <TrayGroup>
            <WifiIcon />
            <VolumeIcon />
            <BatteryIcon />
          </TrayGroup>
          <TrayGroup>
            <TrayText $align="right">
              19:50
              <br />
              02-04-2024
            </TrayText>
            <BellIcon />
          </TrayGroup>
        </Tray>
      </Taskbar>
    </Screen>
  );
}
